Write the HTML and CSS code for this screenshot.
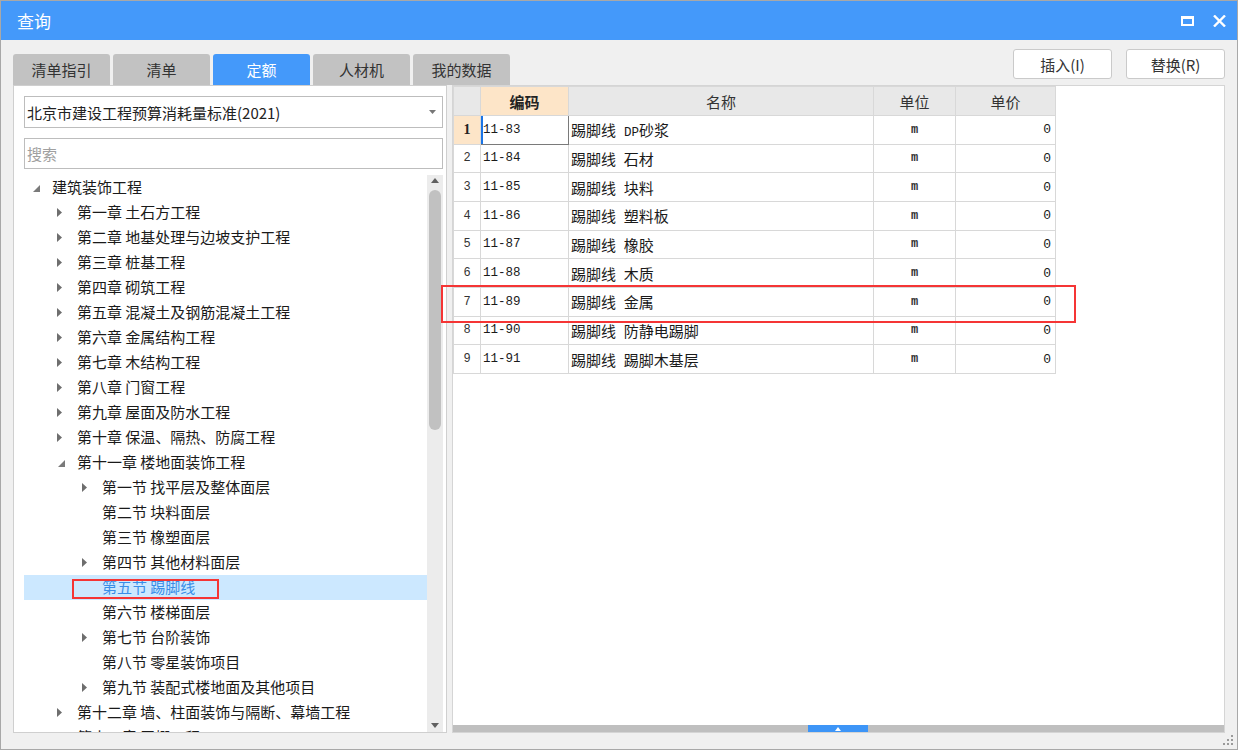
FILE: index.html
```html
<!DOCTYPE html>
<html lang="zh-CN">
<head>
<meta charset="utf-8">
<title>查询</title>
<link rel="stylesheet" href="styles.css">
</head>
<body>
<div class="window">
  <div class="titlebar">
    <span class="title">查询</span>
    <div class="win-ctrls">
      <svg class="ico-max" width="13" height="10" viewBox="0 0 13 10"><rect x="1" y="1" width="11" height="8" fill="none" stroke="#fff" stroke-width="2"/><rect x="0" y="0" width="13" height="3" fill="#fff"/></svg>
      <svg class="ico-close" width="13" height="12" viewBox="0 0 13 12"><path d="M1 0.5L12 11.5M12 0.5L1 11.5" stroke="#fff" stroke-width="2.4" fill="none"/></svg>
    </div>
  </div>
  <div class="main">
    <div class="toprow">
      <div class="tabs">
        <div class="tab">清单指引</div>
        <div class="tab">清单</div>
        <div class="tab active">定额</div>
        <div class="tab">人材机</div>
        <div class="tab">我的数据</div>
      </div>
      <div class="actions">
        <button class="btn">插入(I)</button>
        <button class="btn">替换(R)</button>
      </div>
    </div>
    <div class="content">
      <div class="left">
        <div class="select">
          <span>北京市建设工程预算消耗量标准(2021)</span>
          <svg width="7" height="4" viewBox="0 0 7 4"><path d="M0 0H7L3.5 4Z" fill="#777"/></svg>
        </div>
        <div class="search">搜索</div>
        <div class="tree">
          <div class="tree-rows">
            <div class="node l0"><span class="tog"><svg class="exp" width="7" height="7" viewBox="0 0 7 7"><path d="M7 0V7H0Z" fill="#7a7a7a"/></svg></span>建筑装饰工程</div>
            <div class="node l1"><span class="tog"><svg width="5" height="9" viewBox="0 0 5 9"><path d="M0 0L5 4.5L0 9Z" fill="#6e6e6e"/></svg></span>第一章 土石方工程</div>
            <div class="node l1"><span class="tog"><svg width="5" height="9" viewBox="0 0 5 9"><path d="M0 0L5 4.5L0 9Z" fill="#6e6e6e"/></svg></span>第二章 地基处理与边坡支护工程</div>
            <div class="node l1"><span class="tog"><svg width="5" height="9" viewBox="0 0 5 9"><path d="M0 0L5 4.5L0 9Z" fill="#6e6e6e"/></svg></span>第三章 桩基工程</div>
            <div class="node l1"><span class="tog"><svg width="5" height="9" viewBox="0 0 5 9"><path d="M0 0L5 4.5L0 9Z" fill="#6e6e6e"/></svg></span>第四章 砌筑工程</div>
            <div class="node l1"><span class="tog"><svg width="5" height="9" viewBox="0 0 5 9"><path d="M0 0L5 4.5L0 9Z" fill="#6e6e6e"/></svg></span>第五章 混凝土及钢筋混凝土工程</div>
            <div class="node l1"><span class="tog"><svg width="5" height="9" viewBox="0 0 5 9"><path d="M0 0L5 4.5L0 9Z" fill="#6e6e6e"/></svg></span>第六章 金属结构工程</div>
            <div class="node l1"><span class="tog"><svg width="5" height="9" viewBox="0 0 5 9"><path d="M0 0L5 4.5L0 9Z" fill="#6e6e6e"/></svg></span>第七章 木结构工程</div>
            <div class="node l1"><span class="tog"><svg width="5" height="9" viewBox="0 0 5 9"><path d="M0 0L5 4.5L0 9Z" fill="#6e6e6e"/></svg></span>第八章 门窗工程</div>
            <div class="node l1"><span class="tog"><svg width="5" height="9" viewBox="0 0 5 9"><path d="M0 0L5 4.5L0 9Z" fill="#6e6e6e"/></svg></span>第九章 屋面及防水工程</div>
            <div class="node l1"><span class="tog"><svg width="5" height="9" viewBox="0 0 5 9"><path d="M0 0L5 4.5L0 9Z" fill="#6e6e6e"/></svg></span>第十章 保温、隔热、防腐工程</div>
            <div class="node l1"><span class="tog"><svg class="exp" width="7" height="7" viewBox="0 0 7 7"><path d="M7 0V7H0Z" fill="#7a7a7a"/></svg></span>第十一章 楼地面装饰工程</div>
            <div class="node l2"><span class="tog"><svg width="5" height="9" viewBox="0 0 5 9"><path d="M0 0L5 4.5L0 9Z" fill="#6e6e6e"/></svg></span>第一节 找平层及整体面层</div>
            <div class="node l2"><span class="tog"></span>第二节 块料面层</div>
            <div class="node l2"><span class="tog"></span>第三节 橡塑面层</div>
            <div class="node l2"><span class="tog"><svg width="5" height="9" viewBox="0 0 5 9"><path d="M0 0L5 4.5L0 9Z" fill="#6e6e6e"/></svg></span>第四节 其他材料面层</div>
            <div class="node l2 sel"><span class="tog"></span>第五节 踢脚线</div>
            <div class="node l2"><span class="tog"></span>第六节 楼梯面层</div>
            <div class="node l2"><span class="tog"><svg width="5" height="9" viewBox="0 0 5 9"><path d="M0 0L5 4.5L0 9Z" fill="#6e6e6e"/></svg></span>第七节 台阶装饰</div>
            <div class="node l2"><span class="tog"></span>第八节 零星装饰项目</div>
            <div class="node l2"><span class="tog"><svg width="5" height="9" viewBox="0 0 5 9"><path d="M0 0L5 4.5L0 9Z" fill="#6e6e6e"/></svg></span>第九节 装配式楼地面及其他项目</div>
            <div class="node l1"><span class="tog"><svg width="5" height="9" viewBox="0 0 5 9"><path d="M0 0L5 4.5L0 9Z" fill="#6e6e6e"/></svg></span>第十二章 墙、柱面装饰与隔断、幕墙工程</div>
            <div class="node l1"><span class="tog"><svg width="5" height="9" viewBox="0 0 5 9"><path d="M0 0L5 4.5L0 9Z" fill="#6e6e6e"/></svg></span>第十三章 天棚工程</div>
          </div>
          <div class="vscroll">
            <svg class="arr-up" width="8" height="5" viewBox="0 0 8 5"><path d="M0 5L4 0L8 5Z" fill="#606060"/></svg>
            <div class="vthumb"></div>
            <div class="vspace"></div>
            <svg class="arr-down" width="8" height="5" viewBox="0 0 8 5"><path d="M0 0L8 0L4 5Z" fill="#606060"/></svg>
          </div>
        </div>
      </div>
      <div class="right">
        <div class="grid-area">
          <table class="grid">
            <colgroup><col class="c-no"><col class="c-code"><col class="c-name"><col class="c-unit"><col class="c-price"></colgroup>
            <thead>
              <tr><th></th><th class="hl">编码</th><th>名称</th><th>单位</th><th>单价</th></tr>
            </thead>
            <tbody>
              <tr><td class="no cur">1</td><td class="code sel">11-83</td><td class="name">踢脚线 <span class="m">DP</span>砂浆</td><td class="unit">m</td><td class="price">0</td></tr>
              <tr><td class="no">2</td><td class="code">11-84</td><td class="name">踢脚线 石材</td><td class="unit">m</td><td class="price">0</td></tr>
              <tr><td class="no">3</td><td class="code">11-85</td><td class="name">踢脚线 块料</td><td class="unit">m</td><td class="price">0</td></tr>
              <tr><td class="no">4</td><td class="code">11-86</td><td class="name">踢脚线 塑料板</td><td class="unit">m</td><td class="price">0</td></tr>
              <tr><td class="no">5</td><td class="code">11-87</td><td class="name">踢脚线 橡胶</td><td class="unit">m</td><td class="price">0</td></tr>
              <tr><td class="no">6</td><td class="code">11-88</td><td class="name">踢脚线 木质</td><td class="unit">m</td><td class="price">0</td></tr>
              <tr><td class="no">7</td><td class="code">11-89</td><td class="name">踢脚线 金属</td><td class="unit">m</td><td class="price">0</td></tr>
              <tr><td class="no">8</td><td class="code">11-90</td><td class="name">踢脚线 防静电踢脚</td><td class="unit">m</td><td class="price">0</td></tr>
              <tr><td class="no">9</td><td class="code">11-91</td><td class="name">踢脚线 踢脚木基层</td><td class="unit">m</td><td class="price">0</td></tr>
            </tbody>
          </table>
        </div>
        <div class="hscroll"><div class="hthumb"><svg width="6" height="4" viewBox="0 0 6 4"><path d="M0 4L3 0L6 4Z" fill="#fff"/></svg></div></div>
      </div>
    </div>
    <div class="statusbar">
      <svg class="grip" width="11" height="11" viewBox="0 0 11 11" fill="#9a9a9a"><rect x="8" y="0" width="2" height="2"/><rect x="4" y="4" width="2" height="2"/><rect x="8" y="4" width="2" height="2"/><rect x="0" y="8" width="2" height="2"/><rect x="4" y="8" width="2" height="2"/><rect x="8" y="8" width="2" height="2"/></svg>
    </div>
  </div>
  <div class="mark mark-tree"></div>
  <div class="mark mark-row"></div>
</div>
</body>
</html>
```

FILE: styles.css
```css
* { box-sizing: border-box; margin: 0; padding: 0; }
html, body { width: 1238px; height: 750px; overflow: hidden; background: #fff; }
body {
  font-family: "Noto Sans CJK SC", "Microsoft YaHei", sans-serif;
  font-size: 15px;
  color: #222;
}
.window {
  position: relative;
  width: 1238px;
  height: 750px;
  border: 1px solid #a8a8a8;
  background: #f0f0f0;
  display: flex;
  flex-direction: column;
}
.titlebar {
  flex: none;
  height: 39px;
  background: #4499fa;
  color: #fff;
  display: flex;
  align-items: center;
  justify-content: space-between;
  padding: 0 11px 0 16px;
}
.title { font-size: 17px; }
.win-ctrls { display: flex; align-items: center; gap: 19px; }
.ico-max { margin-top: 1px; }

.main { flex: 1; display: flex; flex-direction: column; padding: 0 12px; min-height: 0; }
.toprow { flex: none; height: 45px; display: flex; justify-content: space-between; }
.tabs { display: flex; gap: 3px; margin-top: 14px; }
.tab {
  width: 97px;
  height: 31px;
  background: #c2c2c2;
  border-radius: 3px 3px 0 0;
  color: #333;
  display: flex;
  align-items: center;
  justify-content: center;
}
.tab.active { background: #4499fa; color: #fff; }
.actions { display: flex; gap: 14px; margin-top: 9px; }
.btn {
  width: 99px;
  height: 30px;
  background: #fff;
  border: 1px solid #cacaca;
  border-radius: 3px;
  font: inherit;
  color: #333;
  display: flex;
  align-items: center;
  justify-content: center;
}

.content { flex: none; height: 648px; display: flex; gap: 5px; }
.left {
  width: 434px;
  flex: none;
  background: #fff;
  border: 1px solid #cfcfcf;
  padding: 10px 3px 0 10px;
  display: flex;
  flex-direction: column;
}
.select {
  flex: none;
  height: 32px;
  border: 1px solid #bdbdbd;
  display: flex;
  align-items: center;
  justify-content: space-between;
  padding: 0 6px 0 2px;
  color: #222;
}
.search {
  flex: none;
  height: 31px;
  margin-top: 10px;
  border: 1px solid #bdbdbd;
  color: #a0a0a0;
  display: flex;
  align-items: center;
  padding-left: 2px;
}
.tree { margin-top: 6px; flex: 1; display: flex; min-height: 0; }
.tree-rows { flex: 1; overflow: hidden; }
.node {
  height: 25px;
  display: flex;
  align-items: center;
  white-space: nowrap;
  color: #1a1a1a;
  padding-bottom: 2px;
}
.node.l1 { padding-left: 25px; }
.node.l2 { padding-left: 50px; }
.node.sel { background: #cce8ff; color: #3a8ee8; }
.tog { flex: none; width: 28px; display: flex; align-items: center; padding-left: 8px; margin-top: 2px; }
.tog .exp { margin-left: 1px; margin-top: 1px; }

.vscroll {
  flex: none;
  width: 16px;
  background: #ececec;
  display: flex;
  flex-direction: column;
  align-items: center;
}
.arr-up { margin-top: 3px; }
.vthumb { margin-top: 7px; width: 12px; height: 240px; border-radius: 6px; background: #c1c1c1; }
.vspace { flex: 1; }
.arr-down { margin-bottom: 4px; }

.right {
  flex: 1;
  background: #fff;
  border: 1px solid #d5d5d5;
  display: flex;
  flex-direction: column;
  min-width: 0;
}
.grid-area { flex: 1; overflow: hidden; }
.grid { border-collapse: collapse; table-layout: fixed; width: 602px; }
.c-no { width: 27px; }
.c-code { width: 88px; }
.c-name { width: 305px; }
.c-unit { width: 82px; }
.c-price { width: 100px; }
.grid th, .grid td { border: 1px solid #d8d8d8; white-space: nowrap; overflow: hidden; }
.grid th {
  height: 29px;
  background: #e8e8e8;
  font-weight: normal;
  color: #333;
  text-align: center;
}
.grid th.hl { background: #fde5c8; font-weight: bold; color: #222; }
.grid td { height: 28.67px; padding: 0; color: #1a1a1a; }
.grid td.no {
  text-align: center;
  font-family: "Liberation Mono", monospace;
  font-size: 12px;
  color: #333;
}
.grid td.no.cur {
  background: #fde5c8;
  font-family: "Liberation Serif", serif;
  font-weight: bold;
  font-size: 14px;
  color: #222;
}
.grid td.code { font-family: "Liberation Mono", monospace; font-size: 12.5px; padding-left: 2px; }
.grid td.code.sel { border: 1px solid #7a7a7a; box-shadow: inset 2px 0 0 #1a74e6; }
.grid td.name { padding-left: 2px; word-spacing: 4.5px; }
.m { font-family: "Liberation Mono", monospace; font-size: 12.5px; word-spacing: 0; }
.grid td.unit { text-align: center; font-family: "Liberation Mono", monospace; font-size: 12px; font-weight: bold; color: #333; }
.grid td.price { text-align: right; padding-right: 4px; font-family: "Liberation Mono", monospace; font-size: 13px; }

.hscroll { flex: none; height: 7px; background: #bfbfbf; display: flex; }
.hthumb {
  margin-left: 355px;
  width: 60px;
  height: 7px;
  background: #3d95f7;
  display: flex;
  align-items: center;
  justify-content: center;
}

.statusbar {
  flex: 1;
  display: flex;
  justify-content: flex-end;
  align-items: flex-end;
  margin-right: -9px;
  padding-bottom: 3px;
}

.mark { position: absolute; border: 2px solid #f53535; pointer-events: none; }
.mark-tree { left: 71px; top: 578px; width: 147px; height: 20px; }
.mark-row { left: 440px; top: 284px; width: 635px; height: 38px; }
```
